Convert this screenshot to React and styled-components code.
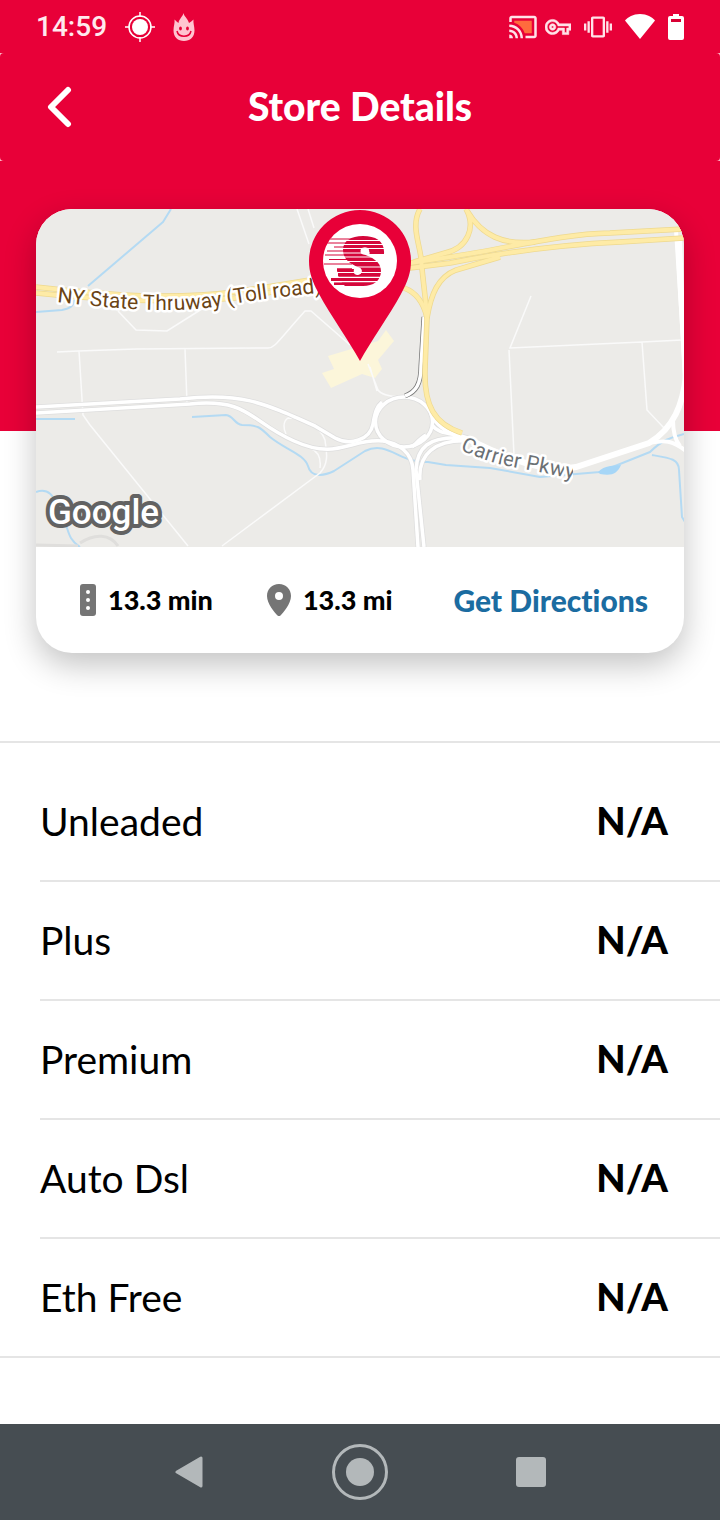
import React from "react";
import styled, { createGlobalStyle } from "styled-components";

const GlobalStyle = createGlobalStyle`
  * { box-sizing: border-box; }
  body {
    margin: 0;
    background: #ffffff;
    color: #000000;
    font-family: Lato, "Liberation Sans", sans-serif;
    font-variant-ligatures: none;
  }
`;

const RED = "#e80038";

const Screen = styled.div`
  display: flex;
  flex-direction: column;
  min-height: 100vh;
`;

const Hero = styled.div`
  background: ${RED};
  padding-bottom: 270px;
`;

const StatusBar = styled.div`
  display: flex;
  align-items: center;
  justify-content: space-between;
  height: 53px;
  padding: 0 36px;
`;

const StatusGroup = styled.div`
  display: flex;
  align-items: center;
  gap: ${(p) => p.$gap}px;
`;

const Clock = styled.time`
  color: #ffe9ee;
  font: 500 28px/32px Roboto, sans-serif;
`;

const Icon = styled.svg`
  display: block;
  flex: none;
`;

const HeaderFrame = styled.div`
  background: #ffb3c3;
`;

const Header = styled.header`
  display: grid;
  grid-template-columns: 48px 1fr 48px;
  align-items: center;
  height: 108px;
  padding: 0 36px;
  border-radius: 4px;
  background: ${RED};
`;

const BackButton = styled.button`
  display: flex;
  align-items: center;
  justify-content: center;
  width: 46px;
  height: 48px;
  padding: 0;
  border: 0;
  background: none;
`;

const Title = styled.h1`
  margin: 0;
  padding-bottom: 2px;
  color: #ffffff;
  font-size: 39px;
  font-weight: 900;
  line-height: 46px;
  text-align: center;
`;

const Card = styled.section`
  margin: -222px 36px 88px;
  border-radius: 36px;
  background: #ffffff;
  box-shadow: 0 12px 32px rgba(0, 0, 0, 0.24);
  overflow: hidden;
`;

const MapView = styled.svg`
  display: block;
  width: 100%;
  height: auto;
  background: #ecebe8;
`;

const CardFooter = styled.div`
  display: flex;
  align-items: center;
  justify-content: space-between;
  height: 106px;
  padding: 0 36px 0 44px;
`;

const Stats = styled.div`
  display: flex;
  gap: 54px;
`;

const Stat = styled.div`
  display: flex;
  align-items: center;
  gap: 12px;
  font-size: 27px;
  font-weight: 900;
  line-height: 36px;
`;

const DirectionsLink = styled.a`
  color: #1b6ca1;
  font-size: 30px;
  font-weight: 900;
  line-height: 36px;
  text-decoration: none;
`;

const FuelSection = styled.section`
  padding: 20px 0 0 40px;
  border-top: 2px solid #e5e5e5;
  border-bottom: 2px solid #e5e5e5;
`;

const FuelTable = styled.table`
  width: 100%;
  border-spacing: 0;
  font-size: 39px;
  line-height: 48px;
`;

const FuelRow = styled.tr`
  height: 119px;
  &:last-child { height: 117px; }
  & > * { border-bottom: 2px solid #e5e5e5; }
  &:last-child > * { border-bottom: 0; }
`;

const FuelName = styled.th`
  padding: 0 0 2px;
  font-weight: 400;
  text-align: left;
`;

const FuelPrice = styled.td`
  padding: 0 52px 4px 0;
  font-size: 38px;
  font-weight: 900;
  text-align: right;
`;

const NavBar = styled.nav`
  display: grid;
  grid-template-columns: repeat(3, 1fr);
  justify-items: center;
  align-items: center;
  height: 96px;
  margin-top: auto;
  padding: 0 104px;
  background: #464d52;
`;

const NavButton = styled.button`
  display: flex;
  align-items: center;
  justify-content: center;
  width: 64px;
  height: 64px;
  padding: 0;
  border: 0;
  background: none;
`;

const fuels = ["Unleaded", "Plus", "Premium", "Auto Dsl", "Eth Free"];

const LocationIcon = () => (
  <Icon width="30" height="30" viewBox="0 0 30 30" fill="none" stroke="#fff">
    <circle cx="15" cy="15" r="8" fill="#fff" stroke="none" />
    <circle cx="15" cy="15" r="11" strokeWidth="1.5" />
    <path d="M15 0v5M15 25v5M0 15h5M25 15h5" strokeWidth="1.5" />
  </Icon>
);

const FlameIcon = () => (
  <Icon width="22" height="28" viewBox="0 0 22 28">
    <path
      fill="#ffc4d0"
      d="M10.500 0C10.800 3 14.500 5 16 10C17.500 9 19 8 20.500 6.500C20 10 21.500 13 21.500 17.500C21.500 24 17 28 11 28S.5 24 .5 17.500C.5 13 2 10 1.500 6.500C3 8 4.200 9 5.500 10C6 6 9.500 4 10.500 0z"
    />
    <ellipse cx="7.500" cy="15.500" rx="1.400" ry="1.900" fill={RED} />
    <ellipse cx="14.500" cy="15.500" rx="1.400" ry="1.900" fill={RED} />
    <path d="M4 18c1.500 7 12.500 7 14 0" fill="none" stroke={RED} strokeWidth="1.500" />
  </Icon>
);

const CastIcon = () => (
  <Icon width="30" height="30" viewBox="0 0 24 24">
    <path fill="#ff6b3d" d="M19 7H5v1.630c3.960 1.280 7.090 4.410 8.370 8.370H19V7z" />
    <path
      fill="#ffe3e9"
      d="M1 18v3h3c0-1.660-1.340-3-3-3zm0-4v2c2.760 0 5 2.240 5 5h2c0-3.870-3.130-7-7-7zm0-4v2c4.970 0 9 4.030 9 9h2c0-6.080-4.930-11-11-11zm20-7H3c-1.100 0-2 .9-2 2v3h2V5h18v14h-7v2h7c1.100 0 2-.9 2-2V5c0-1.100-.9-2-2-2z"
    />
  </Icon>
);

const KeyIcon = () => (
  <Icon width="26" height="26" viewBox="0 0 24 24">
    <path
      fill="#ffe3e9"
      stroke="#ffe3e9"
      strokeWidth="0.500"
      d="M22 19h-6v-4h-2.680c-1.140 2.420-3.600 4-6.320 4-3.860 0-7-3.140-7-7s3.140-7 7-7c2.720 0 5.170 1.580 6.320 4H24v6h-2v4zm-4-2h2v-4h2v-2H11.940l-.23-.67C11.010 8.340 9.110 7 7 7c-2.760 0-5 2.240-5 5s2.240 5 5 5c2.110 0 4.010-1.340 4.710-3.330l.23-.67H18v4zM7 15c-1.650 0-3-1.350-3-3s1.350-3 3-3 3 1.350 3 3-1.350 3-3 3zm0-4c-.55 0-1 .45-1 1s.45 1 1 1 1-.45 1-1-.45-1-1-1z"
    />
  </Icon>
);

const VibrateIcon = () => (
  <Icon width="28" height="28" viewBox="0 0 24 24">
    <path
      fill="#ffe3e9"
      d="M0 15h2V9H0v6zm3 2h2V7H3v10zm19-8v6h2V9h-2zm-3 8h2V7h-2v10zM16.500 3h-9C6.670 3 6 3.670 6 4.500v15c0 .83.67 1.500 1.500 1.500h9c.83 0 1.500-.67 1.500-1.500v-15c0-.83-.67-1.500-1.500-1.500zM16 19H8V5h8v14z"
    />
  </Icon>
);

const WifiIcon = () => (
  <Icon width="30" height="26" viewBox="0 0 30 26">
    <path fill="#fff" d="M15 25L0 6.500C3 3 8 0 15 0s12 3 15 6.500z" />
  </Icon>
);

const BatteryIcon = () => (
  <Icon width="16" height="26" viewBox="0 0 16 26">
    <path fill="#fff" d="M5 0h6v2h3q2 0 2 2v20q0 2-2 2H2q-2 0-2-2V4q0-2 2-2h3z" />
    <path fill="#d80034" d="M3 5h10v3H3z" />
  </Icon>
);

// [y, left end, right end, thickness] of each streak trailing the S
const STREAKS = [
  [239, 330, 352, 1.2],
  [243, 325, 348, 1.2],
  [247, 334, 346, 1.2],
  [251, 327, 346, 1.2],
  [255, 325, 346, 1.2],
  [259.500, 329, 350, 1.2],
  [264, 324, 352, 1.2],
  [270, 337, 352, 3.4],
  [275, 338, 352, 3.2],
  [279.500, 331, 352, 3],
  [283.700, 334, 352, 2.8],
];

const StorePin = () => (
  <g>
    <path
      fill={RED}
      d="M360 361C349 341 331 316 319 294C312 281 309 272 309 261A51 51 0 0 1 411 261C411 272 408 281 401 294C389 316 371 341 360 361z"
    />
    <circle cx="360" cy="261" r="37" fill="#fff" />
    <clipPath id="pin-disc">
      <circle cx="360" cy="261" r="37" />
    </clipPath>
    <g clipPath="url(#pin-disc)">
      <path
        fill="#d5073b"
        d="M384 254H369C370 249 368 247 365 247.500C361 248 360 252 363 254C371 257 381 261 381 271C381 281 373 286 363 286H345C341 283 337 275 338 269H354C353 274 355 275 358 275C362 274 363 270 360 268C350 264 343 259 343 250C343 241 351 236 363 236C376 236 385 241 384 254z"
      />
      {STREAKS.map(([y, left, right, thickness]) => (
        <path
          key={y}
          stroke="#d5073b"
          strokeWidth={thickness}
          d={`M${left} ${y}H${right}`}
        />
      ))}
      <path
        stroke="#fff"
        strokeWidth="1.200"
        d="M345 240.500H386M342 244.500H386M342 248.500H386M342 253H370M342 257H386M344 261.500H386M336 267H386M336 272.500H386M334 277.300H386M330 281.700H386"
      />
      <circle cx="364" cy="251" r="3.500" fill="#fff" />
      <circle cx="358" cy="271" r="3.500" fill="#fff" />
    </g>
  </g>
);

const StoreMap = () => (
  <MapView viewBox="36 209 648 338" role="img" aria-label="Map of the store location">
    <defs>
      <path id="thruway-label" d="M57 302C110 308 175 315 225 305C255 300 285 296 340 291" />
      <path id="parkway-label" d="M460 450Q490 463 513 467L590 482" />
      <clipPath id="parkway-clip">
        <path d="M450 400H573V500H450z" />
      </clipPath>
    </defs>

    {/* buildings */}
    <g fill="#fcf6da">
      <path d="M328 356L378 341L386 330L394 341L378 360L382 369L375 378L362 374L331 388L322 373L334 369z" />
    </g>

    {/* water */}
    <g fill="none" stroke="#b4daf3" strokeWidth="2" strokeLinejoin="round">
      <path d="M171 209L163 222L88 286M36 312L62 310Q74 308 74 300" />
      <path d="M36 419H75M192 417L226 415C234 416 234 424 242 425C258 425 260 427 270 437C286 450 304 454 308 466C311 478 324 476 334 471L365 451C388 440 400 464 428 462L446 465L490 468L540 477L600 472L650 452C664 438 674 437 684 434" />
      <path d="M652 455C670 458 679 459 679 470L682 517L685 522" />
      <path d="M36 492C50 487 54 498 60 510C70 530 66 538 80 547" />
    </g>
    <path fill="#a6d6f7" d="M598 472C605 465 613 466 621 465C617 474 612 476 600 474z" />

    {/* minor streets */}
    <g fill="none" stroke="#fafafa" strokeWidth="1.500">
      <path d="M297 209L309 244M308 209L314 228M118 311L136 330L167 331L205 307" />
      <path d="M57 352L78 351L136 349L268 348C275 348 278 341 305 311H311L350 345M79 351L83 415L90 425L188 546M185 349L187 403M222 546L320 473C330 462 326 450 325 440C320 425 300 418 288 418C282 422 284 430 286 434M310 448C320 452 321 460 320 468" />
      <path d="M531 296L510 348L642 342L682 340M509 350L514 455M642 342L647 410L664 428" />
      <path d="M368 364L378 390Q382 396 400 397M370 367L377 391" />
    </g>

    {/* local roads, casing then surface */}
    {[
      ["#dedede", 5],
      ["#ffffff", 3.5],
    ].map(([color, width]) => (
      <g key={color} fill="none" stroke={color} strokeWidth={width}>
        <path d="M36 407L180 399C240 392 262 402 315 426L335 438C350 446 370 440 373 424C375 412 377 406 382 402" />
        <path d="M36 413L190 404C250 398 250 422 294 441C338 461 350 438 383 441C398 443 412 452 413 470L418 547" />
        <ellipse cx="404" cy="422" rx="28.500" ry="25" />
        <path d="M424 547L416 470C417 448 428 436 462 438M420 480C418 455 434 439 470 441M412 447C417 443 420 438 426 435M432 417C440 429 450 434 470 440M432 425C440 436 455 432 470 439" />
      </g>
    ))}
    <g fill="none" stroke="#ffffff">
      <path strokeWidth="6" d="M470 440C510 460 545 473 576 467L649 443C674 428 683 404 686 375" />
      <path strokeWidth="4" d="M676 230L683 340L686 400" />
      <path strokeWidth="4" d="M649 443C665 440 672 440 686 451M673 420C673 432 675 440 680 446" />
    </g>
    <path fill="#fff" d="M675 236L682 236L687 380L683 380z" />

    {/* dark-edged ramp */}
    <path fill="none" stroke="#777" strokeWidth="5" d="M424 317L421 366C421 384 416 392 405 396" />
    <path fill="none" stroke="#fff" strokeWidth="3.500" d="M424 317L421 366C421 384 416 392 405 396" />

    {/* highway, casing then surface */}
    {[
      ["#eed98f", 5.5],
      ["#feeba6", 4],
    ].map(([color, width]) => (
      <g key={color} fill="none" stroke={color} strokeWidth={width}>
        <path d="M36 287C90 293 160 301 235 292L310 280L410 263L450 257C510 248 560 234 610 233L684 229" />
        <path d="M36 293C90 299 160 304 235 298L310 286L410 268L450 263C520 249 575 244 620 242L684 238" />
        <path d="M420 209C411 225 419 242 421 258C423 282 426 300 427 318L425 370C424 405 434 424 462 433" />
        <path d="M404 288C418 293 424 304 427 318M427 318C431 294 438 277 456 270L500 257" />
        <path d="M466 209C476 227 468 248 445 253L414 262M466 209C482 237 504 245 535 242" />
      </g>
    ))}

    <g
      fontFamily="Roboto, sans-serif"
      fontSize="21"
      stroke="#fff"
      strokeWidth="5"
      strokeLinejoin="round"
      paintOrder="stroke"
    >
      <text fill="#6b4415">
        <textPath href="#thruway-label">NY State Thruway (Toll road)</textPath>
      </text>
      <text fill="#6c7175" clipPath="url(#parkway-clip)">
        <textPath href="#parkway-label">Carrier Pkwy</textPath>
      </text>
    </g>

    <path fill="none" stroke="#dfdedc" strokeWidth="3" d="M36 545L78 546M80 543C95 533 110 534 118 546" />
    <text
      x="48"
      y="524"
      fill="#fff"
      stroke="#626262"
      strokeWidth="8"
      strokeLinejoin="round"
      paintOrder="stroke"
      fontFamily="Roboto, sans-serif"
      fontWeight="500"
      fontSize="35"
    >
      Google
    </text>
    <StorePin />
  </MapView>
);

export default function App() {
  return (
    <Screen>
      <GlobalStyle />
      <Hero>
        <StatusBar>
          <StatusGroup $gap={18}>
            <Clock>14:59</Clock>
            <LocationIcon />
            <FlameIcon />
          </StatusGroup>
          <StatusGroup $gap={13}>
            <StatusGroup $gap={7}>
              <CastIcon />
              <KeyIcon />
            </StatusGroup>
            <VibrateIcon />
            <WifiIcon />
            <BatteryIcon />
          </StatusGroup>
        </StatusBar>
        <HeaderFrame>
          <Header>
            <BackButton type="button" aria-label="Back">
              <Icon width="26" height="42" viewBox="0 0 26 42">
                <path
                  d="M22 4L5 21L22 38"
                  fill="none"
                  stroke="#fff"
                  strokeWidth="6"
                  strokeLinecap="round"
                  strokeLinejoin="round"
                />
              </Icon>
            </BackButton>
            <Title>Store Details</Title>
          </Header>
        </HeaderFrame>
      </Hero>

      <Card>
        <StoreMap />
        <CardFooter>
          <Stats>
            <Stat>
              <Icon width="16" height="32" viewBox="0 0 16 32">
                <rect width="16" height="32" rx="3" fill="#757575" />
                <circle cx="8" cy="8" r="2" fill="#fff" />
                <circle cx="8" cy="16" r="2" fill="#fff" />
                <circle cx="8" cy="24" r="2" fill="#fff" />
              </Icon>
              13.3 min
            </Stat>
            <Stat>
              <Icon width="24" height="32" viewBox="0 0 24 32">
                <path
                  fill="#757575"
                  fillRule="evenodd"
                  d="M12 0C5 0 0 5 0 12c0 8 8 17 10.500 19.500q1.500 1 3 0C16 29 24 20 24 12 24 5 19 0 12 0zm0 8a4 4 0 1 1 0 8 4 4 0 0 1 0-8z"
                />
              </Icon>
              13.3 mi
            </Stat>
          </Stats>
          <DirectionsLink href="#directions">Get Directions</DirectionsLink>
        </CardFooter>
      </Card>

      <FuelSection>
        <FuelTable>
          <tbody>
            {fuels.map((name) => (
              <FuelRow key={name}>
                <FuelName scope="row">{name}</FuelName>
                <FuelPrice>N/A</FuelPrice>
              </FuelRow>
            ))}
          </tbody>
        </FuelTable>
      </FuelSection>

      <NavBar>
        <NavButton type="button" aria-label="Back">
          <Icon width="28" height="32" viewBox="0 0 28 32">
            <path
              fill="#b3b8ba"
              stroke="#b3b8ba"
              strokeWidth="3"
              strokeLinejoin="round"
              d="M26 2V30L2 16z"
            />
          </Icon>
        </NavButton>
        <NavButton type="button" aria-label="Home">
          <Icon width="56" height="56" viewBox="0 0 56 56">
            <circle cx="28" cy="28" r="26.500" fill="none" stroke="#b3b8ba" strokeWidth="3" />
            <circle cx="28" cy="28" r="14" fill="#b3b8ba" />
          </Icon>
        </NavButton>
        <NavButton type="button" aria-label="Recent apps">
          <Icon width="30" height="30" viewBox="0 0 30 30">
            <rect width="30" height="30" rx="3" fill="#b3b8ba" />
          </Icon>
        </NavButton>
      </NavBar>
    </Screen>
  );
}
